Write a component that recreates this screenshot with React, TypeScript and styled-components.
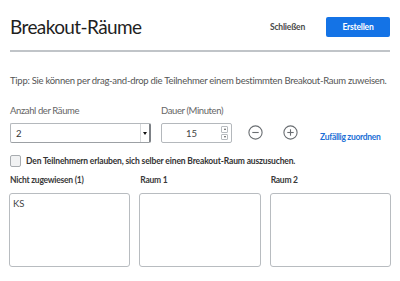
import * as React from 'react';
import styled, { createGlobalStyle } from 'styled-components';

const GlobalStyle = createGlobalStyle`
  html, body {
    margin: 0;
    padding: 0;
    background: #ffffff;
  }
  body {
    font-family: Lato, 'Liberation Sans', sans-serif;
    color: #333;
  }
`;

const Page = styled.div`
  width: 400px;
  height: 281px;
  box-sizing: border-box;
  padding: 0 10px;
  overflow: hidden;
  white-space: nowrap;
`;

const Header = styled.header`
  display: flex;
  align-items: center;
  justify-content: space-between;
  padding: 15px 0 11px;
  border-bottom: 2px solid #c0c4c8;
`;

const Title = styled.h1`
  margin: 0;
  font-size: 19px;
  line-height: 24px;
  font-weight: 400;
  letter-spacing: -0.6px;
  color: #1f1f1f;
`;

const Actions = styled.div`
  display: flex;
  align-items: center;
  gap: 21px;
`;

const TextButton = styled.button`
  border: 0;
  background: none;
  padding: 0;
  font-family: inherit;
  font-size: 8.5px;
  font-weight: 700;
  letter-spacing: -0.2px;
  color: #4a4a4a;
`;

const PrimaryButton = styled.button`
  width: 64px;
  height: 20px;
  border: 0;
  border-radius: 2px;
  background: #1473e6;
  color: #fff;
  font-family: inherit;
  font-size: 8.5px;
  font-weight: 700;
  letter-spacing: -0.2px;
`;

const Hint = styled.p`
  margin: 22px 0 0;
  font-size: 9.5px;
  line-height: 14px;
  letter-spacing: -0.27px;
  color: #555;
`;

const FormRow = styled.div`
  display: flex;
  align-items: flex-end;
  margin-top: 16px;
`;

const Field = styled.div<{ $width: number; $gap?: number }>`
  display: flex;
  flex-direction: column;
  gap: 5px;
  width: ${(p) => p.$width}px;
  margin-right: ${(p) => p.$gap ?? 0}px;
`;

const Label = styled.label`
  font-size: 9.5px;
  line-height: 14px;
  letter-spacing: -0.4px;
  color: #666;
`;

const SelectBox = styled.div`
  position: relative;
  height: 20px;
  box-sizing: border-box;
  border: 1px solid #b4b8bc;
  border-right: 2px solid #7d8186;
  border-bottom-color: #9ca0a4;
  border-radius: 2px;
  display: flex;
  align-items: center;
  padding-left: 5px;
  font-size: 9.5px;
  color: #333;
`;

const SelectArrow = styled.span`
  position: absolute;
  right: 0;
  top: 0;
  bottom: 0;
  width: 8px;
  border-left: 1px solid #d6d8da;
  display: flex;
  align-items: center;
  justify-content: center;
  &::after {
    content: '';
    border-left: 2px solid transparent;
    border-right: 2px solid transparent;
    border-top: 3px solid #111;
  }
`;

const NumberBox = styled.div`
  position: relative;
  height: 20px;
  box-sizing: border-box;
  border: 1px solid #b4b8bc;
  border-radius: 2px;
  display: flex;
  align-items: center;
  justify-content: center;
  padding-right: 10px;
  font-size: 9.5px;
  color: #444;
`;

const Spinner = styled.span`
  position: absolute;
  right: 3px;
  top: 2px;
  bottom: 2px;
  width: 7px;
  display: flex;
  flex-direction: column;
  gap: 1px;
`;

const SpinStep = styled.span<{ $up?: boolean }>`
  flex: 1;
  border: 1px solid #b8bcc0;
  border-radius: 1px;
  display: flex;
  align-items: center;
  justify-content: center;
  &::after {
    content: '';
    border-left: 1.5px solid transparent;
    border-right: 1.5px solid transparent;
    ${(p) => (p.$up ? 'border-bottom: 2px solid #555;' : 'border-top: 2px solid #555;')}
  }
`;

const IconButton = styled.button<{ $gap: number }>`
  border: 0;
  background: none;
  padding: 0;
  width: 15px;
  height: 15px;
  margin: 0 0 3px ${(p) => p.$gap}px;
  display: flex;
  color: #6a6e72;
`;

const LinkButton = styled.button`
  border: 0;
  background: none;
  padding: 0;
  margin: 0 0 0 22px;
  font-family: inherit;
  font-size: 8.5px;
  font-weight: 700;
  line-height: 12px;
  letter-spacing: -0.3px;
  color: #1c6fd6;
`;

const CheckRow = styled.label`
  display: flex;
  align-items: center;
  gap: 5px;
  margin-top: 12px;
  font-size: 8.5px;
  font-weight: 700;
  line-height: 12px;
  letter-spacing: -0.15px;
  color: #333;
`;

const CheckBox = styled.span`
  width: 11px;
  height: 12px;
  box-sizing: border-box;
  border: 1px solid #a8acb0;
  border-radius: 2px;
  background: #f1f2f3;
`;

const Columns = styled.div`
  display: grid;
  grid-template-columns: repeat(3, 1fr);
  gap: 9px;
  margin: 7px -1px 0;
`;

const Column = styled.div`
  display: flex;
  flex-direction: column;
  gap: 7px;
`;

const ColumnTitle = styled.div`
  font-size: 8.5px;
  font-weight: 700;
  line-height: 12px;
  letter-spacing: -0.25px;
  color: #3a3a3a;
  padding-left: 1px;
`;

const DropZone = styled.div`
  height: 74px;
  box-sizing: border-box;
  border: 1px solid #b8bcc0;
  border-radius: 3px;
  padding: 4px 3px;
  font-size: 9.5px;
  line-height: 12px;
  color: #444;
`;

const CircleIcon = ({ plus }: { plus?: boolean }) => (
  <svg width="15" height="15" viewBox="0 0 15 15" fill="none" stroke="currentColor" strokeWidth="1.1">
    <circle cx="7.5" cy="7.5" r="6.6" />
    <line x1="4.3" y1="7.5" x2="10.7" y2="7.5" />
    {plus && <line x1="7.5" y1="4.3" x2="7.5" y2="10.7" />}
  </svg>
);

const rooms = [
  { title: 'Nicht zugewiesen (1)', members: ['KS'] },
  { title: 'Raum 1', members: [] as string[] },
  { title: 'Raum 2', members: [] as string[] },
];

const App = (): React.ReactElement => {
  return (
    <Page>
      <GlobalStyle />
      <Header>
        <Title>Breakout-Räume</Title>
        <Actions>
          <TextButton type="button">Schließen</TextButton>
          <PrimaryButton type="button">Erstellen</PrimaryButton>
        </Actions>
      </Header>
      <Hint>
        Tipp: Sie können per drag-and-drop die Teilnehmer einem bestimmten Breakout-Raum zuweisen.
      </Hint>
      <FormRow>
        <Field $width={141} $gap={10}>
          <Label>Anzahl der Räume</Label>
          <SelectBox>
            2
            <SelectArrow />
          </SelectBox>
        </Field>
        <Field $width={71}>
          <Label>Dauer (Minuten)</Label>
          <NumberBox>
            15
            <Spinner>
              <SpinStep $up />
              <SpinStep />
            </Spinner>
          </NumberBox>
        </Field>
        <IconButton type="button" $gap={16} aria-label="Weniger">
          <CircleIcon />
        </IconButton>
        <IconButton type="button" $gap={20} aria-label="Mehr">
          <CircleIcon plus />
        </IconButton>
        <LinkButton type="button">Zufällig zuordnen</LinkButton>
      </FormRow>
      <CheckRow>
        <CheckBox />
        Den Teilnehmern erlauben, sich selber einen Breakout-Raum auszusuchen.
      </CheckRow>
      <Columns>
        {rooms.map((room) => (
          <Column key={room.title}>
            <ColumnTitle>{room.title}</ColumnTitle>
            <DropZone>
              {room.members.map((m) => (
                <div key={m}>{m}</div>
              ))}
            </DropZone>
          </Column>
        ))}
      </Columns>
    </Page>
  );
};

export default App;
